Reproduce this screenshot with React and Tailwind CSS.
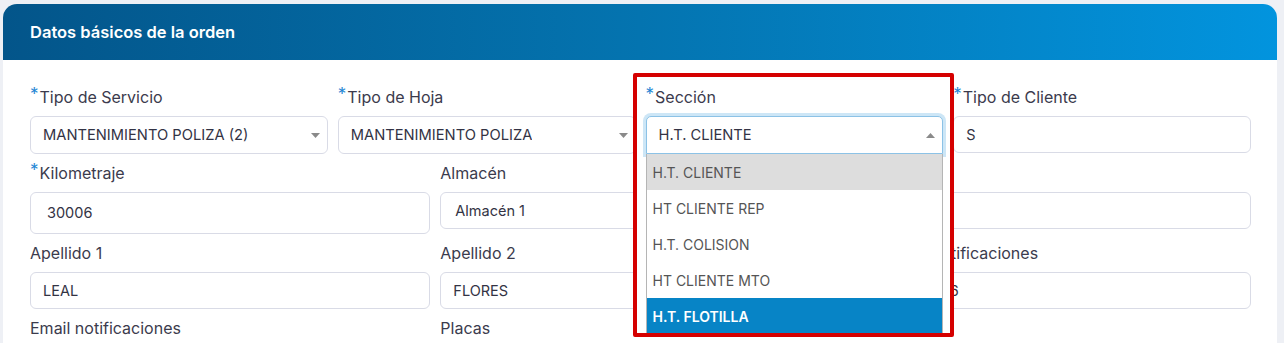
import React from "react";

const font = { fontFamily: "Inter, 'Noto Sans', sans-serif" };

const Req = () => (
  <span className="relative -top-[3px] mr-[1px] text-[17px] leading-none text-[#1f86d4]">*</span>
);

const Label = ({ children, req }) => (
  <div className="mb-2 h-[22px] whitespace-nowrap text-[16px] leading-[22px] text-[#3b3b4d]">
    {req && <Req />}
    {children}
  </div>
);

const Caret = ({ up }) => (
  <svg width="9" height="5" viewBox="0 0 9 5" className="shrink-0">
    {up ? <path d="M0 5 L4.5 0 L9 5 Z" fill="#8a8a8a" /> : <path d="M0 0 L9 0 L4.5 5 Z" fill="#8a8a8a" />}
  </svg>
);

const Select = ({ value }) => (
  <div className="flex h-[38px] items-center justify-between rounded-[6px] border border-[#d9dbe6] bg-white pl-3 pr-[7px] text-[14.7px] text-[#333344]">
    <span className="truncate">{value}</span>
    <Caret />
  </div>
);

const Input = ({ value, h = "h-[37px]", pl = "pl-3" }) => (
  <div className={`flex ${h} items-center overflow-hidden whitespace-nowrap rounded-[6px] border border-[#d9dbe6] bg-white ${pl} text-[14.5px] text-[#333344]`}>
    {value}
  </div>
);

const options = ["H.T. CLIENTE", "HT CLIENTE REP", "H.T. COLISION", "HT CLIENTE MTO", "H.T. FLOTILLA"];

const SeccionField = () => (
  <div className="relative">
    {/* panel blanco y marco rojo de la anotación */}
    <div className="absolute -left-[13px] -top-[13px] z-10 h-[264px] w-[321px] bg-white" />
    <div className="pointer-events-none absolute -left-[13px] -top-[13px] z-30 h-[264px] w-[321px] rounded-[2px] border-[4.5px] border-[#d50000]" />

    <div className="relative z-20">
      <Label req>Sección</Label>
      <div className="flex h-[38px] items-center justify-between rounded-t-[5px] border border-[#8cc2e6] bg-white pl-3 pr-[7px] text-[14.7px] text-[#333344] shadow-[0_0_0_3px_#cde6f6]">
        <span>H.T. CLIENTE</span>
        <Caret up />
      </div>
      <div className="absolute left-0 top-[68px] w-full border-x border-[#b5b5b5] bg-white text-[14px]">
        {options.map((o, i) => (
          <div
            key={o}
            className={
              "flex h-[36px] items-center pl-[6px] " +
              (i === 0
                ? "bg-[#dddddd] text-[#555]"
                : i === options.length - 1
                ? "bg-[#0784c6] font-semibold text-white"
                : "text-[#555]")
            }
          >
            {o}
          </div>
        ))}
      </div>
    </div>
  </div>
);

export default function App() {
  return (
    <div className="min-h-[343px] bg-[#eef0f5] pl-[3px] pr-[7px] pt-[4px]" style={font}>
      <div className="overflow-hidden rounded-t-[14px] bg-white">
        <div className="flex h-[56px] items-center bg-gradient-to-r from-[#03558a] via-[#0474b0] to-[#0294de] pl-[27px]">
          <h2 className="text-[16.5px] font-semibold text-white">Datos básicos de la orden</h2>
        </div>

        <div className="flex flex-col gap-y-2 pb-6 pl-[27px] pr-[26px] pt-[26px]">
          <div className="grid grid-cols-4 items-start gap-x-[10px]">
            <div>
              <Label req>Tipo de Servicio</Label>
              <Select value="MANTENIMIENTO POLIZA (2)" />
            </div>
            <div>
              <Label req>Tipo de Hoja</Label>
              <Select value="MANTENIMIENTO POLIZA" />
            </div>
            <SeccionField />
            <div>
              <Label req>Tipo de Cliente</Label>
              <Input value="S" h="h-[37px]" />
            </div>
          </div>

          <div className="grid grid-cols-3 items-start gap-x-[10px]">
            <div>
              <Label req>Kilometraje</Label>
              <Input value="30006" h="h-[42px]" pl="pl-4" />
            </div>
            <div>
              <Label>Almacén</Label>
              <Input value="Almacén 1" pl="pl-[14px]" />
            </div>
            <div>
              <Label>RFC</Label>
              <Input value="XAXX0101C" />
            </div>
          </div>

          <div className="grid grid-cols-3 items-start gap-x-[10px]">
            <div>
              <Label>Apellido 1</Label>
              <Input value="LEAL" />
            </div>
            <div>
              <Label>Apellido 2</Label>
              <Input value="FLORES" />
            </div>
            <div>
              <Label>Celular de notificaciones</Label>
              <Input value="52551234566" />
            </div>
          </div>

          <div className="grid grid-cols-3 items-start gap-x-[10px]">
            <div>
              <Label>Email notificaciones</Label>
              <Input value="" />
            </div>
            <div>
              <Label>Placas</Label>
              <Input value="" />
            </div>
            <div>
              <Label>Color</Label>
              <Input value="" />
            </div>
          </div>
        </div>
      </div>
    </div>
  );
}
